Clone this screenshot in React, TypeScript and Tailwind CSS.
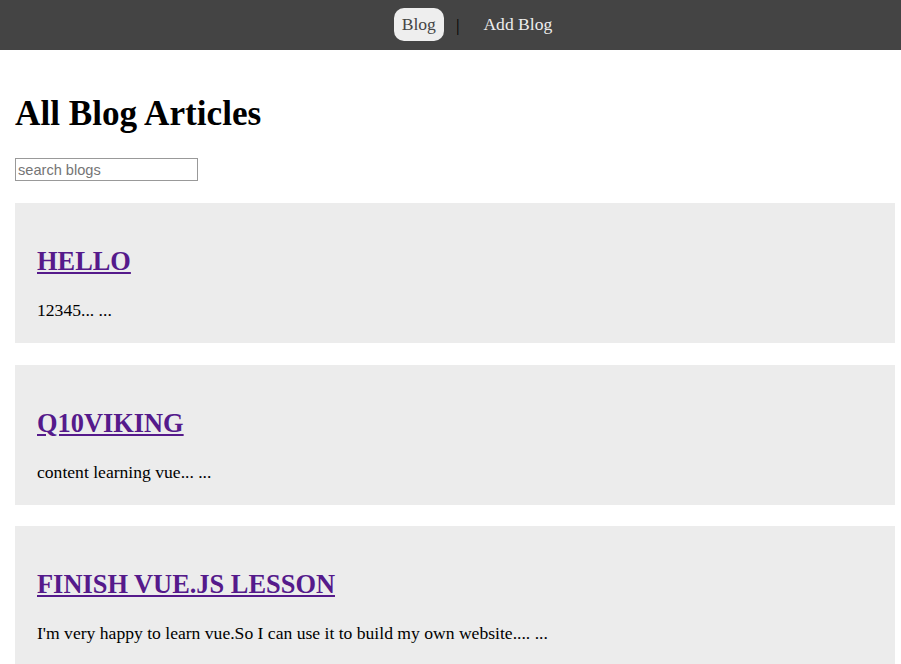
const blogs = [
  { title: 'HELLO', body: '12345... ...' },
  { title: 'q10Viking', body: 'content learning vue... ...' },
  { title: 'finish vue.js lesson', body: "I'm very happy to learn vue.So I can use it to build my own website.... ..." },
]

export default function App() {
  return (
    <div className="min-h-screen bg-white font-['Liberation_Serif',serif] text-[17.6px] text-black">
      <nav className="flex h-[50px] items-center justify-center bg-[#444] pl-[53px]">
        <a className="-mt-[2px] rounded-[10px] bg-[#eee] px-2 py-[6px] leading-[21px] text-[#444]">Blog</a>
        <span className="ml-3 text-black">|</span>
        <a className="-mt-[2px] ml-[16px] px-2 py-[6px] leading-[21px] text-[#eee]">Add Blog</a>
      </nav>

      <div className="pt-[20px] pr-[6px] pl-[15px]">
        <h1 className="my-[24px] text-[35.2px] leading-[40px] font-bold">All Blog Articles</h1>
        <input
          type="text"
          placeholder="search blogs"
          className="mt-[3px] block h-[23px] w-[183px] border border-[#999] px-[2px] font-['Liberation_Sans',sans-serif] text-[14.6px] placeholder:text-[#757575]"
        />

        {blogs.map((b, i) => (
          <div key={b.title} className={`${i === 2 ? 'mt-[21px]' : 'mt-[22px]'} bg-[#ececec] px-[22px] pt-[22px] pb-[22px]`}>
            <h2 className="mt-[21px] mb-[23px] text-[26.4px] leading-[30px] font-bold uppercase">
              <a className="text-[#551a8b] underline">{b.title}</a>
            </h2>
            <p className="leading-[22px]">{b.body}</p>
          </div>
        ))}
      </div>
    </div>
  )
}
